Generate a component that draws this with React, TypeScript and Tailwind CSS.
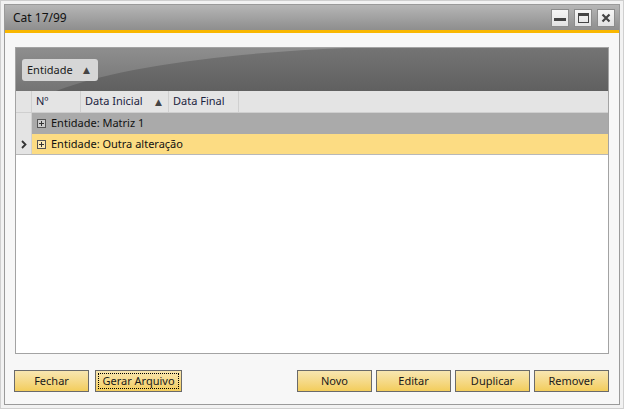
import React from "react";

const font = { fontFamily: '"Noto Sans", "DejaVu Sans", sans-serif' };

function TitleButton({ children }: { children: React.ReactNode }) {
  return (
    <div className="flex h-[18px] w-[18px] items-center justify-center border border-[#8c8c8c] bg-gradient-to-b from-[#f6f6f6] to-[#e2e2e2]">
      {children}
    </div>
  );
}

function Button({ label, focused = false, w = "w-[75px]" }: { label: string; focused?: boolean; w?: string }) {
  return (
    <button
      className={`${w} flex h-[22px] items-center justify-center border border-[#6a6a6a] bg-gradient-to-b from-[#f8e6b0] to-[#f3cd5a] p-[2px] text-[11px] text-[#1a1a1a]`}
    >
      <span
        className={`flex h-full w-full items-center justify-center ${focused ? "border border-dotted border-black" : ""}`}
      >
        {label}
      </span>
    </button>
  );
}

function PlusBox() {
  return (
    <span className="relative mr-[5px] inline-block h-[9px] w-[9px] border border-[#555] bg-white/40">
      <span className="absolute left-[1px] top-[3px] h-[1px] w-[5px] bg-[#333]" />
      <span className="absolute left-[3px] top-[1px] h-[5px] w-[1px] bg-[#333]" />
    </span>
  );
}

export default function App() {
  return (
    <div className="h-[409px] w-[624px] border border-[#cfcfcf] bg-[#f2f2f2] p-[3px]" style={font}>
      <div className="flex h-full flex-col border border-[#9a9a9a] bg-[#f7f7f7]">
        {/* title bar */}
        <div className="flex h-[25px] items-center justify-between bg-gradient-to-b from-[#b6b6b6] to-[#8e8e8e] pl-[8px] pr-[4px]">
          <span className="text-[12px] text-[#111]">Cat 17/99</span>
          <div className="flex gap-[5px]">
            <TitleButton>
              <span className="mt-[3px] block h-[3px] w-[12px] bg-[#444]" />
            </TitleButton>
            <TitleButton>
              <span className="block h-[10px] w-[11px] border border-t-[3px] border-[#444]" />
            </TitleButton>
            <TitleButton>
              <svg width="10" height="10" viewBox="0 0 10 10">
                <path d="M1.5 1.5 L8.5 8.5 M8.5 1.5 L1.5 8.5" stroke="#444" strokeWidth="2.2" />
              </svg>
            </TitleButton>
          </div>
        </div>
        <div className="h-[3px] bg-[#f9b700]" />

        {/* body */}
        <div className="flex flex-1 flex-col pl-[9px] pr-[10px] pt-[14px]">
          <div className="ml-[1px] flex h-[307px] flex-col border border-[#a3a3a3] bg-white">
            {/* group-by panel */}
            <div className="relative h-[43px] overflow-hidden bg-gradient-to-b from-[#747474] to-[#606060]">
              <svg className="absolute left-0 top-0" width="592" height="43" viewBox="0 0 592 43" preserveAspectRatio="none">
                <defs>
                  <linearGradient id="sw" x1="0" y1="0" x2="0" y2="1">
                    <stop offset="0" stopColor="#8e8e8e" />
                    <stop offset="1" stopColor="#747474" />
                  </linearGradient>
                </defs>
                <path d="M0 0 H330 C230 4 110 16 40 43 H0 Z" fill="url(#sw)" />
              </svg>
              <div className="relative ml-[6px] mt-[11px] flex h-[22px] w-[76px] items-center justify-between rounded-[3px] bg-[#d6d6d6] pl-[5px] pr-[8px] text-[11px] text-[#1a1a1a]">
                <span>Entidade</span>
                <span className="text-[9px] text-[#444]">▲</span>
              </div>
            </div>

            {/* column header */}
            <div className="flex h-[22px] border-b border-[#cfcfcf] bg-[#e4e4e4] text-[11px] text-[#1b2340]">
              <div className="w-[16px] border-r border-[#d0d0d0]" />
              <div className="flex w-[49px] items-center border-r border-[#d0d0d0] pl-[4px]">Nº</div>
              <div className="flex w-[88px] items-center justify-between border-r border-[#d0d0d0] pl-[4px] pr-[6px]">
                <span>Data Inicial</span>
                <span className="text-[9px] text-[#444]">▲</span>
              </div>
              <div className="flex w-[70px] items-center border-r border-[#d0d0d0] pl-[4px]">Data Final</div>
              <div className="flex-1" />
            </div>

            {/* rows */}
            <div className="flex h-[21px] text-[11px] text-[#111]">
              <div className="w-[16px] border-r border-[#d0d0d0] bg-[#e4e4e4]" />
              <div className="flex flex-1 items-center bg-[#aaaaaa] pl-[5px]">
                <PlusBox />
                <span>Entidade: Matriz 1</span>
              </div>
            </div>
            <div className="flex h-[21px] border-b border-[#b8b8b8] text-[11px] text-[#111]">
              <div className="flex w-[16px] items-center justify-center border-r border-[#d0d0d0] bg-[#e4e4e4]">
                <svg width="6" height="9" viewBox="0 0 6 9">
                  <path d="M1 1 L4.5 4.5 L1 8" stroke="#333" strokeWidth="1.8" fill="none" />
                </svg>
              </div>
              <div className="flex flex-1 items-center bg-[#fcdc83] pl-[5px]">
                <PlusBox />
                <span>Entidade: Outra alteração</span>
              </div>
            </div>
            <div className="flex-1 bg-white" />
          </div>

          {/* buttons */}
          <div className="mt-[16px] flex items-center">
            <Button label="Fechar" />
            <div className="ml-[6px]">
              <Button label="Gerar Arquivo" focused w="w-[87px]" />
            </div>
            <div className="ml-auto flex gap-[4px]">
              <Button label="Novo" />
              <Button label="Editar" />
              <Button label="Duplicar" />
              <Button label="Remover" />
            </div>
          </div>
        </div>
      </div>
    </div>
  );
}
